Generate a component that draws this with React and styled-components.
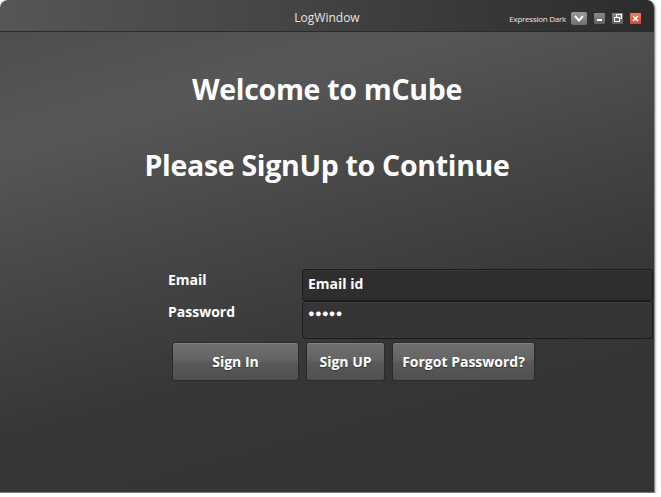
import React from 'react'
import styled, { createGlobalStyle } from 'styled-components'

const GlobalStyle = createGlobalStyle`
  html, body {
    margin: 0;
    padding: 0;
    background: #ffffff;
  }
  body {
    font-family: "Open Sans", "Liberation Sans", sans-serif;
  }
`

const Window = styled.div`
  width: 654px;
  height: 492px;
  display: flex;
  flex-direction: column;
  border-radius: 8px 8px 0 0;
  overflow: hidden;
  border-right: 1px solid #8a8a8a;
  border-bottom: 1px solid #7a7a7a;
  box-shadow: 1px 1px 2px rgba(0, 0, 0, 0.25);
`

const TitleBar = styled.div`
  height: 31px;
  flex: none;
  display: grid;
  grid-template-columns: 1fr auto 1fr;
  align-items: center;
  background: linear-gradient(90deg, #565656 0%, #444 45%, #2c2c2c 100%);
  border-bottom: 1px solid #2a2a2a;
`

const Title = styled.div`
  grid-column: 2;
  color: #e6e6e6;
  font-size: 12px;
  padding-top: 3px;
`

const Controls = styled.div`
  grid-column: 3;
  justify-self: end;
  display: flex;
  align-items: center;
  gap: 7px;
  padding-right: 13px;
  padding-top: 5px;
`

const ThemeLabel = styled.span`
  color: #e8e8e8;
  font-size: 8px;
  letter-spacing: -0.25px;
  margin-right: -2px;
`

const DropButton = styled.div`
  width: 16px;
  height: 13px;
  border-radius: 2px;
  background: linear-gradient(#9a9a9a, #707070);
  display: flex;
  align-items: center;
  justify-content: center;
`

const CtrlButton = styled.div`
  width: 11px;
  height: 11px;
  border-radius: 1px;
  display: flex;
  align-items: center;
  justify-content: center;
  background: ${(p) => (p.$close ? 'linear-gradient(#f07a62, #d24a34)' : 'linear-gradient(#8a8a8a, #5e5e5e)')};
`

const Body = styled.div`
  flex: 1;
  display: flex;
  flex-direction: column;
  align-items: center;
  background: linear-gradient(165deg, #4e4e4e 0%, #575757 18%, #474747 40%, #363636 65%, #333 100%);
  color: #fff;
`

const Heading = styled.h1`
  margin: 0;
  font-size: 28.5px;
  font-weight: 700;
  letter-spacing: -0.3px;
  line-height: 34px;
  margin-top: ${(p) => p.$top}px;
`

const Form = styled.div`
  align-self: stretch;
  margin-top: 87px;
  padding-left: 168px;
  padding-right: 1px;
  display: grid;
  grid-template-columns: 134px 1fr;
  grid-template-rows: 32px 38px;
`

const Label = styled.div`
  font-size: 14px;
  font-weight: 700;
  line-height: 20px;
  padding-top: 1px;
`

const Field = styled.div`
  background: ${(p) => (p.$light ? '#353535' : '#2e2e2e')};
  border: 1px solid #1c1c1c;
  border-radius: 3px;
  box-shadow: inset 0 1px 0 rgba(255, 255, 255, 0.04);
  font-size: 14px;
  font-weight: 700;
  line-height: 20px;
  padding: 4px 5px;
`

const Dots = styled.span`
  font-size: 11px;
  letter-spacing: 0.3px;
  position: relative;
  top: -4px;
`

const Buttons = styled.div`
  align-self: stretch;
  margin-top: 3px;
  padding-left: 172px;
  display: flex;
  gap: 7px;
`

const Button = styled.button`
  width: ${(p) => p.$w}px;
  height: 39px;
  border: 1px solid #2a2a2a;
  border-radius: 3px;
  background: linear-gradient(#6e6e6e 0%, #666 40%, #585858 55%, #505050 100%);
  box-shadow: inset 0 1px 0 rgba(255, 255, 255, 0.15);
  color: #fff;
  font-family: inherit;
  font-size: 14px;
  font-weight: 700;
  padding: 0;
  text-shadow: 0 1px 1px rgba(0, 0, 0, 0.4);
`

const App = () => (
  <>
    <GlobalStyle />
    <Window>
      <TitleBar>
        <Title>LogWindow</Title>
        <Controls>
          <ThemeLabel>Expression Dark</ThemeLabel>
          <DropButton>
            <svg width="10" height="7" viewBox="0 0 10 7">
              <path d="M1 1 L5 5.5 L9 1" stroke="#fff" strokeWidth="2" fill="none" />
            </svg>
          </DropButton>
          <CtrlButton>
            <svg width="7" height="7" viewBox="0 0 7 7">
              <rect x="1" y="4" width="5" height="2" fill="#fff" />
            </svg>
          </CtrlButton>
          <CtrlButton>
            <svg width="8" height="8" viewBox="0 0 8 8">
              <rect x="2.5" y="0.5" width="5" height="4" stroke="#fff" fill="none" />
              <rect x="0.5" y="3.5" width="5" height="4" stroke="#fff" fill="#666" />
            </svg>
          </CtrlButton>
          <CtrlButton $close>
            <svg width="7" height="7" viewBox="0 0 7 7">
              <path d="M1 1 L6 6 M6 1 L1 6" stroke="#fff" strokeWidth="1.6" />
            </svg>
          </CtrlButton>
        </Controls>
      </TitleBar>
      <Body>
        <Heading $top={40}>Welcome to mCube</Heading>
        <Heading $top={42}>Please SignUp to Continue</Heading>
        <Form>
          <Label>Email</Label>
          <Field>Email id</Field>
          <Label>Password</Label>
          <Field $light><Dots>●●●●●</Dots></Field>
        </Form>
        <Buttons>
          <Button $w={127}>Sign In</Button>
          <Button $w={79}>Sign UP</Button>
          <Button $w={143}>Forgot Password?</Button>
        </Buttons>
      </Body>
    </Window>
  </>
)

export default App
